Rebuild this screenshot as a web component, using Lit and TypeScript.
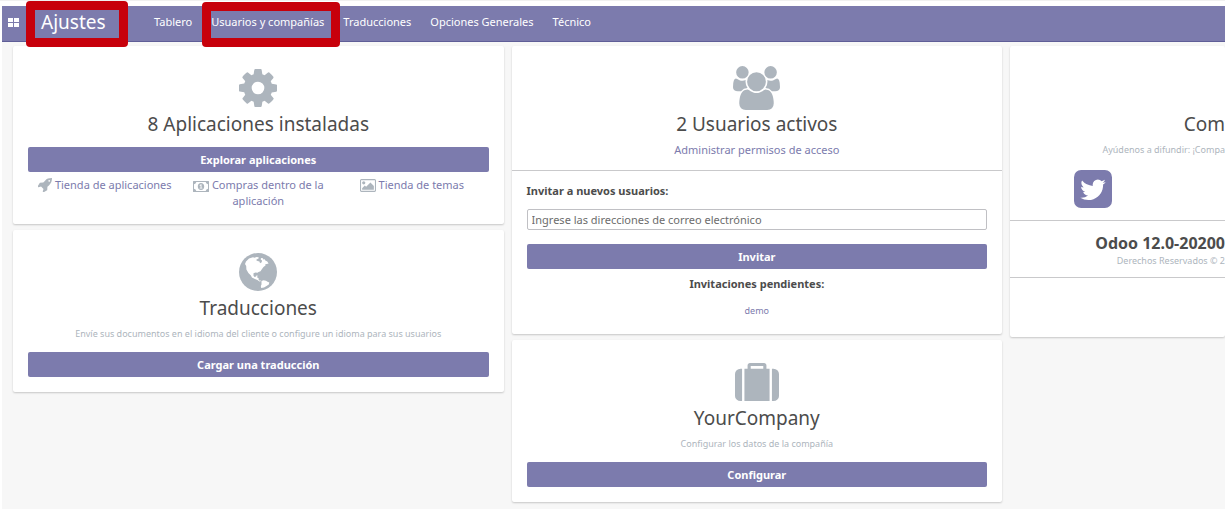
import { LitElement, html, css, svg } from "lit";
import { customElement } from "lit/decorators.js";

const icons = {
  cog: svg`<svg viewBox="128 128 1536 1536" width="38" height="38" aria-hidden="true"><path d="M1152 896q0-106-75-181t-181-75-181 75-75 181 75 181 181 75 181-75 75-181zm512-109v222q0 12-8 23t-20 13l-185 28q-19 54-39 91 35 50 107 138 10 12 10 25t-9 23q-27 37-99 108t-94 71q-12 0-26-9l-138-108q-44 23-91 38-16 136-29 186-7 28-36 28h-222q-14 0-24.5-8.5t-11.5-21.5l-28-184q-49-16-90-37l-141 107q-10 9-25 9-14 0-25-11-126-114-165-168-7-10-7-23 0-12 8-23 15-21 51-66.5t54-70.5q-27-50-41-99l-183-27q-13-2-21-12.5t-8-23.5v-222q0-12 8-23t19-13l186-28q14-46 39-92-40-57-107-138-10-12-10-24 0-10 9-23 26-36 98.5-107.5t94.5-71.5q13 0 26 10l138 107q44-23 91-38 16-136 29-186 7-28 36-28h222q14 0 24.5 8.5t11.5 21.5l28 184q49 16 90 37l142-107q9-9 24-9 13 0 25 10 129 119 165 170 7 8 7 22 0 12-8 23-15 21-51 66.5t-54 70.5q26 50 41 98l183 28q13 2 21 12.5t8 23.5z"/></svg>`,
  globe: svg`<svg viewBox="0 0 38 38" width="38" height="38" aria-hidden="true"><circle cx="19" cy="19" r="19"/><path class="land" d="M6 11l1-2.500 3-3 4-1.300 1.500.5 2-.6 2 .2.300 1-1.300.800-1.500.9 1.500 1 2 .6.500 1.700 1.700-1 .3-1.700-1.300-1 .3-1.500 2 .2.300 1.300 1.500-.3.500 1.300 2 1 1.300 2-1.800.5-1.500.2.200 1.300-2 1.300-1.500 2-1.500 2.300-2 .9-1 .6-2-.2-2 .8v2.400l1 1.200 1.600-.3.300-1 1.200-.2-.5 2.200 1.400.5.2 1.800 1.200.9 1-.2.3.500-1.800.4-2-1.600-2.500-1-3-1.500-1-2-2.500-2.500-2-3.500-.2-3.500zM22.500 28l2-.8 2.500.5 1.500 1 1.800.8-.5 2-2.300 1.500-2.500 1.500-2.800.4-.4-2 .7-1.500z"/></svg>`,
  users: svg`<svg viewBox="0 0 1920 1792" width="47" height="44" aria-hidden="true"><path d="M593 896q-162 5-265 128h-134q-82 0-138-40.5t-56-118.5q0-353 124-353 6 0 43.5 21t97.5 42.5 119 21.5q67 0 133-23-5 37-5 66 0 139 81 256zm1071 637q0 120-73 189.5t-194 69.5h-874q-121 0-194-69.5t-73-189.5q0-53 3.5-103.5t14-109 26.5-108.5 43-97.5 62-81 85.5-53.5 111.5-20q10 0 43 21.5t73 48 107 48 135 21.5 135-21.5 107-48 73-48 43-21.5q61 0 111.5 20t85.5 53.5 62 81 43 97.5 26.5 108.5 14 109 3.500 103.500zm-1024-1277q0 106-75 181t-181 75-181-75-75-181 75-181 181-75 181 75 75 181zm704 384q0 159-112.5 271.5t-271.5 112.5-271.5-112.5-112.5-271.5 112.5-271.5 271.5-112.5 271.5 112.5 112.5 271.5zm576 225q0 78-56 118.5t-138 40.5h-134q-103-123-265-128 81-117 81-256 0-29-5-66 66 23 133 23 59 0 119-21.5t97.5-42.5 43.5-21q124 0 124 353zm-128-609q0 106-75 181t-181 75-181-75-75-181 75-181 181-75 181 75 75 181z"/></svg>`,
  suitcase: svg`<svg viewBox="0 0 1792 1664" preserveAspectRatio="none" width="44" height="38" aria-hidden="true"><path d="M640 256h512v-128h-512v128zm-352 0v1408h-64q-92 0-158-66t-66-158v-960q0-92 66-158t158-66h64zm1120 0v1408h-1024v-1408h128v-160q0-40 28-68t68-28h576q40 0 68 28t28 68v160h128zm384 224v960q0 92-66 158t-158 66h-64v-1408h64q92 0 158 66t66 158z"/></svg>`,
  twitter: svg`<svg viewBox="128 128 1536 1536" width="38" height="38" aria-hidden="true"><path d="M1408 610q-56 25-121 34 68-40 93-117-65 38-134 51-61-66-153-66-87 0-148.5 61.5t-61.500 148.500q0 29 5 48-129-7-242-65t-192-155q-29 50-29 106 0 114 91 175-47-1-100-26v2q0 75 50 133.500t123 72.500q-29 8-51 8-13 0-39-4 21 63 74.500 104t121.500 42q-116 90-261 90-26 0-50-3 148 94 322 94 112 0 210-35.500t168-95 120.500-137 75-162 24.500-168.500q0-18-1-27 63-45 105-109zm256-194v960q0 119-84.500 203.500t-203.500 84.500h-960q-119 0-203.500-84.500t-84.500-203.500v-960q0-119 84.500-203.500t203.500-84.500h960q119 0 203.500 84.500t84.500 203.500z"/></svg>`,
  rocket: svg`<svg viewBox="64 128 1600 1600" width="14" height="14" aria-hidden="true"><path d="M1440 448q0-40-28-68t-68-28-68 28-28 68 28 68 68 28 68-28 28-68zm224-288q0 249-75.500 430.500t-253.500 360.500q-81 80-195 176l-20 379q-2 16-16 26l-384 224q-7 4-16 4-12 0-23-9l-64-64q-13-14-8-32l85-276-281-281-276 85q-3 1-9 1-14 0-23-9l-64-64q-17-19-5-39l224-384q10-14 26-16l379-20q96-114 176-195 188-187 358-258t431-71q14 0 24 9.500t10 22.500z"/></svg>`,
  money: svg`<svg viewBox="0 0 16 11" width="16" height="11" aria-hidden="true"><path fill-rule="evenodd" d="M.5 0h15q.5 0 .5.500v10q0 .5-.5.500h-15q-.5 0-.5-.5v-10q0-.5.500-.5zM3.300 1Q3 3 1 3.200v4.600Q3 8 3.300 10h9.400Q13 8 15 7.800V3.200Q13 3 12.700 1zM8 2c2 0 3.200 1.500 3.200 3.500S10 9 8 9 4.800 7.500 4.800 5.500 6 2 8 2zm-.2 1.300L6.500 4.400l.5.600.6-.4v2.200h-.9v.8h2.700v-.8h-.9V3.300z"/></svg>`,
  image: svg`<svg viewBox="-64 128 1920 1536" width="16" height="13" aria-hidden="true"><path d="M576 576q0 80-56 136t-136 56-136-56-56-136 56-136 136-56 136 56 56 136zm1024 384v448h-1408v-192l320-320 160 160 512-512zm96-704h-1600q-13 0-22.500 9.500t-9.500 22.500v1216q0 13 9.500 22.500t22.500 9.500h1600q13 0 22.500-9.500t9.500-22.500v-1216q0-13-9.500-22.500t-22.500-9.500zm160 32v1216q0 66-47 113t-113 47h-1600q-66 0-113-47t-47-113v-1216q0-66 47-113t113-47h1600q66 0 113 47t47 113z"/></svg>`,
};

@customElement("app-root")
export class AppRoot extends LitElement {
  static styles = css`
    * { box-sizing: border-box; }
    :host {
      display: block;
      min-height: 100vh;
      padding: 6px 0 0 2px;
      overflow: hidden;
      box-sizing: border-box;
      background: linear-gradient(#f0f0f0 1px, #fff 1px 6px, transparent 6px),
        linear-gradient(90deg, #fff 2px, #f7f7f7 2px);
      color: #4c4c4c;
      font: 11px/16px "Noto Sans", "Open Sans", sans-serif;
    }
    a { color: #7c7bad; text-decoration: none; }
    h1, h2, h3, p { margin: 0; font-weight: 400; }
    svg { display: block; fill: currentColor; }
    .land { fill: #fff; }
    .bar {
      display: flex;
      align-items: center;
      height: 36px;
      padding: 0 6px 3px;
      background: #7c7bad;
      border-bottom: 1px solid #5f5e97;
    }
    .bar a { color: #fff; }
    .apps { border: 0; padding: 0; background: none; color: #fff; }
    .brand { margin-left: 22px; width: 113px; font-size: 19px; line-height: 24px; }
    .menu { display: flex; gap: 19px; }
    .marked { position: relative; }
    .marked::after {
      content: "";
      position: absolute;
      inset: -12px -16px -17px -9px;
      border: 9px solid #c7000b;
      border-radius: 4px;
      pointer-events: none;
    }
    .brand .marked::after { inset: -8px -22px -12px -15px; }
    .board {
      display: grid;
      grid-template-columns: 41% 41% 1fr;
      align-items: start;
      padding: 4px 0 8px 7px;
    }
    .column { display: grid; gap: 6px; padding: 0 4px; }
    .column:last-child { padding-right: 0; }
    .card {
      background: #fff;
      border-radius: 2px;
      box-shadow: 0 1px 2px rgba(0, 0, 0, 0.2);
      text-align: center;
    }
    .trailing { text-align: right; white-space: nowrap; }
    .part { padding: 18px 15px 15px; }
    .part:not(:last-child) { padding-bottom: 12px; }
    .part + .part { padding-top: 12px; border-top: 1px solid #c9c9cb; }
    .trailing .part { padding-right: 0; }
    .trailing .about { padding-bottom: 8px; }
    .picture {
      display: flex;
      height: 48px;
      align-items: center;
      justify-content: center;
      color: #adb5bd;
    }
    .title { font-size: 19px; line-height: 24px; margin-bottom: 6px; }
    .note { color: #adb5bd; font-size: 9px; line-height: 16px; }
    .action {
      display: block;
      width: 100%;
      height: 25px;
      padding: 0;
      border: 0;
      border-radius: 2px;
      background: #7c7bad;
      color: #fff;
      font: 700 11px/16px "Noto Sans", "Open Sans", sans-serif;
    }
    .title + .action { margin-top: 11px; }
    .note + .action { margin-top: 10px; }
    .shops { display: grid; grid-template-columns: repeat(3, 1fr); padding-top: 5px; }
    .shops a { padding: 0 4px; }
    .shops svg { display: inline-block; vertical-align: -3px; margin-right: 3px; color: #adb5bd; }
    .strong { display: block; font-weight: 700; }
    .left { text-align: left; }
    .field {
      display: block;
      width: 100%;
      height: 21px;
      margin: 10px 0 14px;
      padding: 0 4px;
      border: 1px solid #c0c0c4;
      border-radius: 2px;
      font: inherit;
      color: inherit;
    }
    .field::placeholder { color: #6c6c6c; opacity: 1; }
    .action + .strong { margin: 7px 0 10px; }
    .small { font-size: 9px; }
    .share { display: flex; padding: 12px 49px 0; }
    .version { font-size: 16px; line-height: 20px; font-weight: 700; }
    .blank { height: 60px; }
  `;

  render() {
    return html`
      <header class="bar">
        <button class="apps" aria-label="Aplicaciones">
          <svg viewBox="0 0 11 9" width="11" height="9"><path d="M0 0h5v4H0zM6 0h5v4H6zM0 5h5v4H0zM6 5h5v4H6z" /></svg>
        </button>
        <h1 class="brand"><a class="marked" href="#">Ajustes</a></h1>
        <nav class="menu">
          <a href="#">Tablero</a>
          <a class="marked" href="#">Usuarios y compañías</a>
          <a href="#">Traducciones</a>
          <a href="#">Opciones Generales</a>
          <a href="#">Técnico</a>
        </nav>
      </header>
      <main class="board">
        <div class="column">
          <section class="card">
            <div class="part">
              <div class="picture">${icons.cog}</div>
              <h2 class="title">8 Aplicaciones instaladas</h2>
              <button class="action">Explorar aplicaciones</button>
              <div class="shops">
                <a href="#">${icons.rocket}Tienda de aplicaciones</a>
                <a href="#">${icons.money}Compras dentro de la aplicación</a>
                <a href="#">${icons.image}Tienda de temas</a>
              </div>
            </div>
          </section>
          <section class="card">
            <div class="part">
              <div class="picture">${icons.globe}</div>
              <h2 class="title">Traducciones</h2>
              <p class="note">Envíe sus documentos en el idioma del cliente o configure un idioma para sus usuarios</p>
              <button class="action">Cargar una traducción</button>
            </div>
          </section>
        </div>
        <div class="column">
          <section class="card">
            <div class="part">
              <div class="picture">${icons.users}</div>
              <h2 class="title">2 Usuarios activos</h2>
              <a href="#">Administrar permisos de acceso</a>
            </div>
            <div class="part">
              <label class="strong left" for="emails">Invitar a nuevos usuarios:</label>
              <input class="field" id="emails" type="text" placeholder="Ingrese las direcciones de correo electrónico" />
              <button class="action">Invitar</button>
              <strong class="strong">Invitaciones pendientes:</strong>
              <a class="small" href="#">demo</a>
            </div>
          </section>
          <section class="card">
            <div class="part">
              <div class="picture">${icons.suitcase}</div>
              <h2 class="title">YourCompany</h2>
              <p class="note">Configurar los datos de la compañía</p>
              <button class="action">Configurar</button>
            </div>
          </section>
        </div>
        <div class="column">
          <section class="card trailing">
            <div class="part">
              <div class="picture"></div>
              <h2 class="title">Com</h2>
              <p class="note">Ayúdenos a difundir: ¡Compa</p>
              <div class="share"><a href="#" aria-label="Twitter">${icons.twitter}</a></div>
            </div>
            <div class="part about">
              <h3 class="version">Odoo 12.0-20200</h3>
              <p class="note">Derechos Reservados © 2</p>
            </div>
            <div class="part blank"></div>
          </section>
        </div>
      </main>
    `;
  }
}
